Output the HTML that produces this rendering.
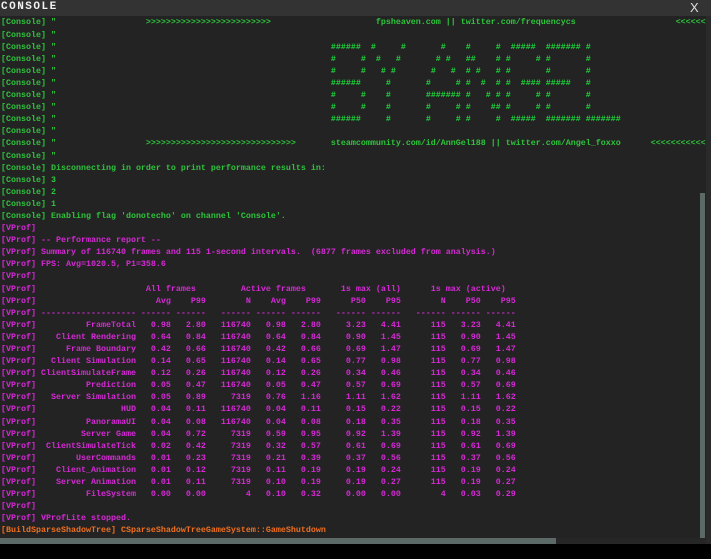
<!DOCTYPE html>
<html><head><meta charset="utf-8">
<style>
html,body{margin:0;padding:0;width:711px;height:559px;overflow:hidden;background:#000;}
#wrap{position:absolute;left:0;top:0;width:711px;height:544px;background:#232323;overflow:hidden;}
#title{position:absolute;left:0;top:0;width:711px;height:16px;background:#333333;z-index:5;}
#title .t{position:absolute;left:1px;top:1px;font:bold 11px "Liberation Mono",monospace;letter-spacing:1.5px;color:#f2f2f2;}
#title .x{position:absolute;left:690px;top:0px;font:13px "Liberation Sans",sans-serif;color:#ddd;}
#con{position:absolute;left:1px;top:4.4px;width:705px;height:534px;overflow:hidden;}
pre{margin:0;font-family:"Liberation Mono",monospace;font-weight:bold;font-size:8.33px;line-height:12.1px;white-space:pre;}
.g{color:#2ec43c}.a{color:#1ed83e}.m{color:#d52ad5}.o{color:#f07020}
#hs{position:absolute;left:0;top:538px;width:556px;height:6px;background:#5b6967;}
#hs2{position:absolute;left:556px;top:538px;width:150px;height:6px;background:#262626;}
#vs{position:absolute;left:700px;top:193px;width:5px;height:351px;background:#5b6967;}
#vr{position:absolute;left:706px;top:16px;width:5px;height:528px;background:#2a2a2a;}
</style></head><body>
<div id="wrap">
<div id="title"><span class="t">CONSOLE</span><span class="x">X</span></div>
<div id="con"><pre class="g">[Console] "
[Console] "                  &gt;&gt;&gt;&gt;&gt;&gt;&gt;&gt;&gt;&gt;&gt;&gt;&gt;&gt;&gt;&gt;&gt;&gt;&gt;&gt;&gt;&gt;&gt;&gt;&gt;                     fpsheaven.com || twitter.com/frequencycs                    &lt;&lt;&lt;&lt;&lt;&lt;&lt;&lt;&lt;&lt;&lt;&lt;
[Console] "
[Console] "                                                       <span class="a">######  #     #       #    #     #  #####  ####### #</span>
[Console] "                                                       <span class="a">#     #  #   #       # #   ##    # #     # #       #</span>
[Console] "                                                       <span class="a">#     #   # #       #   #  # #   # #       #       #</span>
[Console] "                                                       <span class="a">######     #       #     # #  #  # #  #### #####   #</span>
[Console] "                                                       <span class="a">#     #    #       ####### #   # # #     # #       #</span>
[Console] "                                                       <span class="a">#     #    #       #     # #    ## #     # #       #</span>
[Console] "                                                       <span class="a">######     #       #     # #     #  #####  ####### #######</span>
[Console] "
[Console] "                  &gt;&gt;&gt;&gt;&gt;&gt;&gt;&gt;&gt;&gt;&gt;&gt;&gt;&gt;&gt;&gt;&gt;&gt;&gt;&gt;&gt;&gt;&gt;&gt;&gt;&gt;&gt;&gt;&gt;&gt;       steamcommunity.com/id/AnnGel188 || twitter.com/Angel_foxxo      &lt;&lt;&lt;&lt;&lt;&lt;&lt;&lt;&lt;&lt;&lt;&lt;&lt;&lt;&lt;
[Console] "
[Console] Disconnecting in order to print performance results in:
[Console] 3
[Console] 2
[Console] 1
[Console] Enabling flag 'donotecho' on channel 'Console'.</pre><pre class="m">[VProf]
[VProf] -- Performance report --
[VProf] Summary of 116740 frames and 115 1-second intervals.  (6877 frames excluded from analysis.)
[VProf] FPS: Avg=1020.5, P1=358.6
[VProf]
[VProf]                      All frames         Active frames       1s max (all)      1s max (active)
[VProf]                        Avg    P99        N    Avg    P99      P50    P95        N    P50    P95
[VProf] ------------------- ------ ------   ------ ------ ------   ------ ------   ------ ------ ------
[VProf]          FrameTotal   0.98   2.80   116740   0.98   2.80     3.23   4.41      115   3.23   4.41
[VProf]    Client Rendering   0.64   0.84   116740   0.64   0.84     0.90   1.45      115   0.90   1.45
[VProf]      Frame Boundary   0.42   0.66   116740   0.42   0.66     0.69   1.47      115   0.69   1.47
[VProf]   Client Simulation   0.14   0.65   116740   0.14   0.65     0.77   0.98      115   0.77   0.98
[VProf] ClientSimulateFrame   0.12   0.26   116740   0.12   0.26     0.34   0.46      115   0.34   0.46
[VProf]          Prediction   0.05   0.47   116740   0.05   0.47     0.57   0.69      115   0.57   0.69
[VProf]   Server Simulation   0.05   0.89     7319   0.76   1.16     1.11   1.62      115   1.11   1.62
[VProf]                 HUD   0.04   0.11   116740   0.04   0.11     0.15   0.22      115   0.15   0.22
[VProf]          PanoramaUI   0.04   0.08   116740   0.04   0.08     0.18   0.35      115   0.18   0.35
[VProf]         Server Game   0.04   0.72     7319   0.59   0.95     0.92   1.39      115   0.92   1.39
[VProf]  ClientSimulateTick   0.02   0.42     7319   0.32   0.57     0.61   0.69      115   0.61   0.69
[VProf]        UserCommands   0.01   0.23     7319   0.21   0.39     0.37   0.56      115   0.37   0.56
[VProf]    Client_Animation   0.01   0.12     7319   0.11   0.19     0.19   0.24      115   0.19   0.24
[VProf]    Server Animation   0.01   0.11     7319   0.10   0.19     0.19   0.27      115   0.19   0.27
[VProf]          FileSystem   0.00   0.00        4   0.10   0.32     0.00   0.00        4   0.03   0.29
[VProf]
[VProf] VProfLite stopped.</pre><pre class="o">[BuildSparseShadowTree] CSparseShadowTreeGameSystem::GameShutdown</pre></div>
<div id="vr"></div>
<div id="vs"></div>
<div id="hs"></div><div id="hs2"></div>
</div>
</body></html>
